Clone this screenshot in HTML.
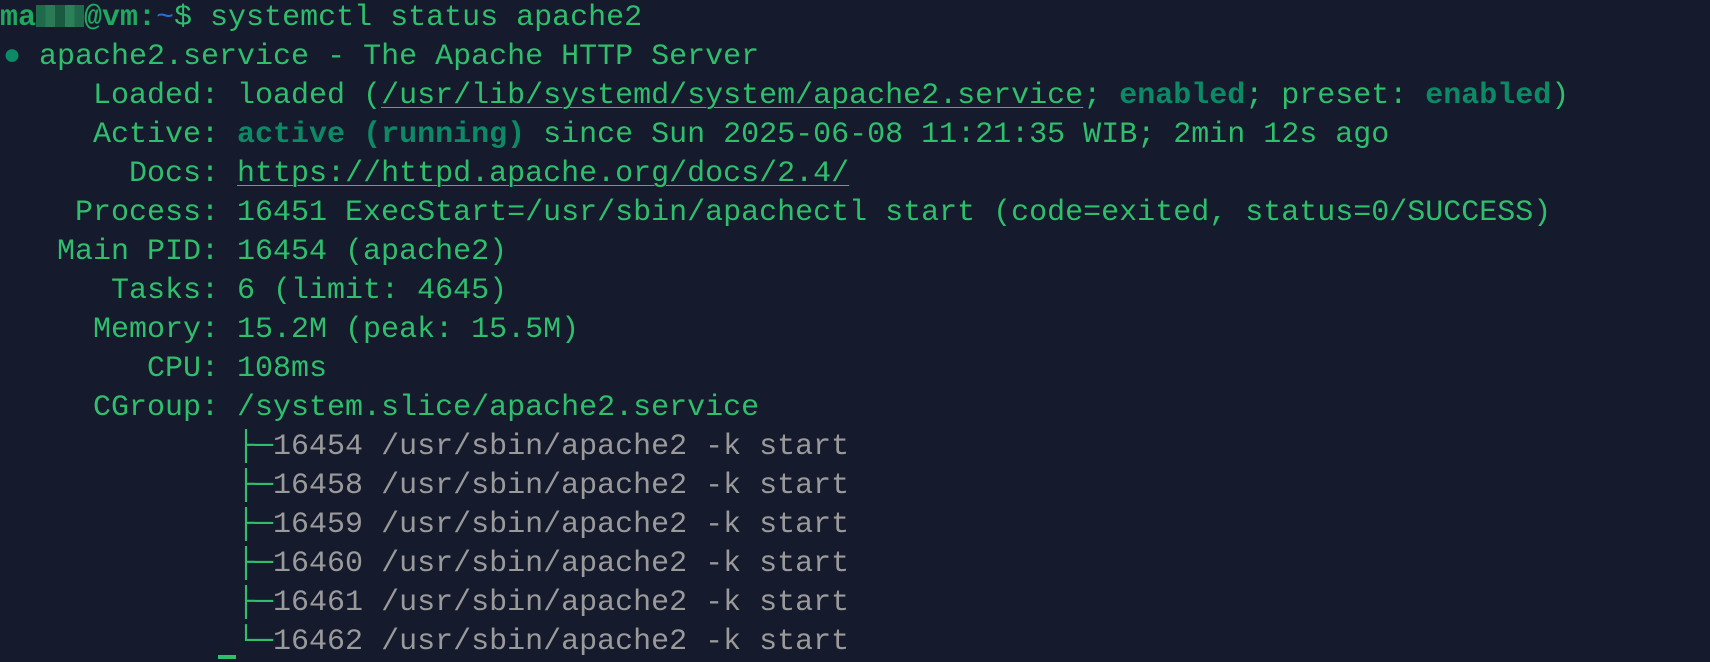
<!DOCTYPE html>
<html><head><meta charset="utf-8"><style>
html,body{margin:0;padding:0;background:#151a2c;width:1710px;height:659px;overflow:hidden}
.t{position:absolute;left:3px;top:-1px;font-family:"Liberation Mono","DejaVu Sans Mono",monospace;font-size:30px;line-height:39px;color:#2fbf6c;white-space:pre}
.b{font-weight:bold;color:#0c8a66}
.p{font-weight:bold;color:#1fa85e}
.u{text-decoration:underline;text-decoration-thickness:1px;text-underline-offset:4px}
.g{color:#9a9a9a}
.bl{color:#2a6fd0}
.blur{display:inline-block;width:48px;height:22px;vertical-align:-2px;background:linear-gradient(90deg,#1e6a4a 0 20%,#2a7a55 20% 40%,#1a5a40 40% 60%,#2c8058 60% 80%,#1f6a4a 80%)}
.cur{position:absolute;left:218px;top:655px;width:18px;height:4px;background:#2fbf6c}
</style></head><body>
<div class="t"><div style="margin-left:-3px"><span class="p">ma</span><span class="blur"></span><span class="p">@vm:</span><span class="bl">~</span>$ systemctl status apache2</div><div><span class="b">●</span> apache2.service - The Apache HTTP Server</div><div>     Loaded: loaded (<span class="u">/usr/lib/systemd/system/apache2.service</span>; <span class="b">enabled</span>; preset: <span class="b">enabled</span>)</div><div>     Active: <span class="b">active (running)</span> since Sun 2025-06-08 11:21:35 WIB; 2min 12s ago</div><div>       Docs: <span class="u">https://httpd.apache.org/docs/2.4/</span></div><div>    Process: 16451 ExecStart=/usr/sbin/apachectl start (code=exited, status=0/SUCCESS)</div><div>   Main PID: 16454 (apache2)</div><div>      Tasks: 6 (limit: 4645)</div><div>     Memory: 15.2M (peak: 15.5M)</div><div>        CPU: 108ms</div><div>     CGroup: /system.slice/apache2.service</div><div>             ├─<span class="g">16454 /usr/sbin/apache2 -k start</span></div><div>             ├─<span class="g">16458 /usr/sbin/apache2 -k start</span></div><div>             ├─<span class="g">16459 /usr/sbin/apache2 -k start</span></div><div>             ├─<span class="g">16460 /usr/sbin/apache2 -k start</span></div><div>             ├─<span class="g">16461 /usr/sbin/apache2 -k start</span></div><div>             └─<span class="g">16462 /usr/sbin/apache2 -k start</span></div></div>
<div class="cur"></div>
</body></html>
